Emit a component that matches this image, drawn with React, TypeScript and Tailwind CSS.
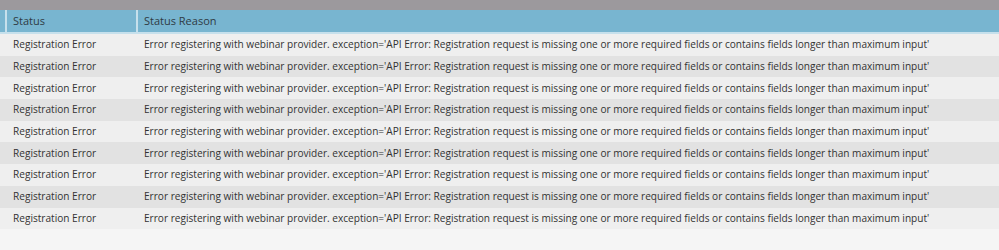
const reason =
  "Error registering with webinar provider. exception='API Error: Registration request is missing one or more required fields or contains fields longer than maximum input'"

const rows = Array.from({ length: 9 }, (_, i) => ({ id: i, status: 'Registration Error', reason }))

export default function App() {
  return (
    <div className="h-[250px] w-[999px] overflow-hidden bg-[#f5f5f5] font-['Open_Sans',sans-serif] text-[10.1px] text-[#333]">
      <div className="h-[10px] bg-[#9c999d]" />
      {/* header */}
      <div className="flex h-[24px] border-b-2 border-[#c6e0ec] bg-[#78b5d0]">
        <div className="w-[7px] shrink-0 border-r-2 border-[#c6e0ec]" />
        <div className="flex w-[131px] shrink-0 items-center border-r-2 border-[#c6e0ec] pl-[6px] text-[11px] text-[#2f3b44]">
          Status
        </div>
        <div className="flex flex-1 items-center pl-[6px] text-[11px] text-[#2f3b44]">Status Reason</div>
      </div>
      {rows.map((row) => (
        <div
          key={row.id}
          className={`flex h-[21.7px] items-center ${row.id % 2 === 0 ? 'bg-[#efefef]' : 'bg-[#e2e2e2]'}`}
        >
          <div className="w-[138px] shrink-0 pl-[13px]">{row.status}</div>
          <div className="whitespace-nowrap pl-[6px]">{row.reason}</div>
        </div>
      ))}
    </div>
  )
}
